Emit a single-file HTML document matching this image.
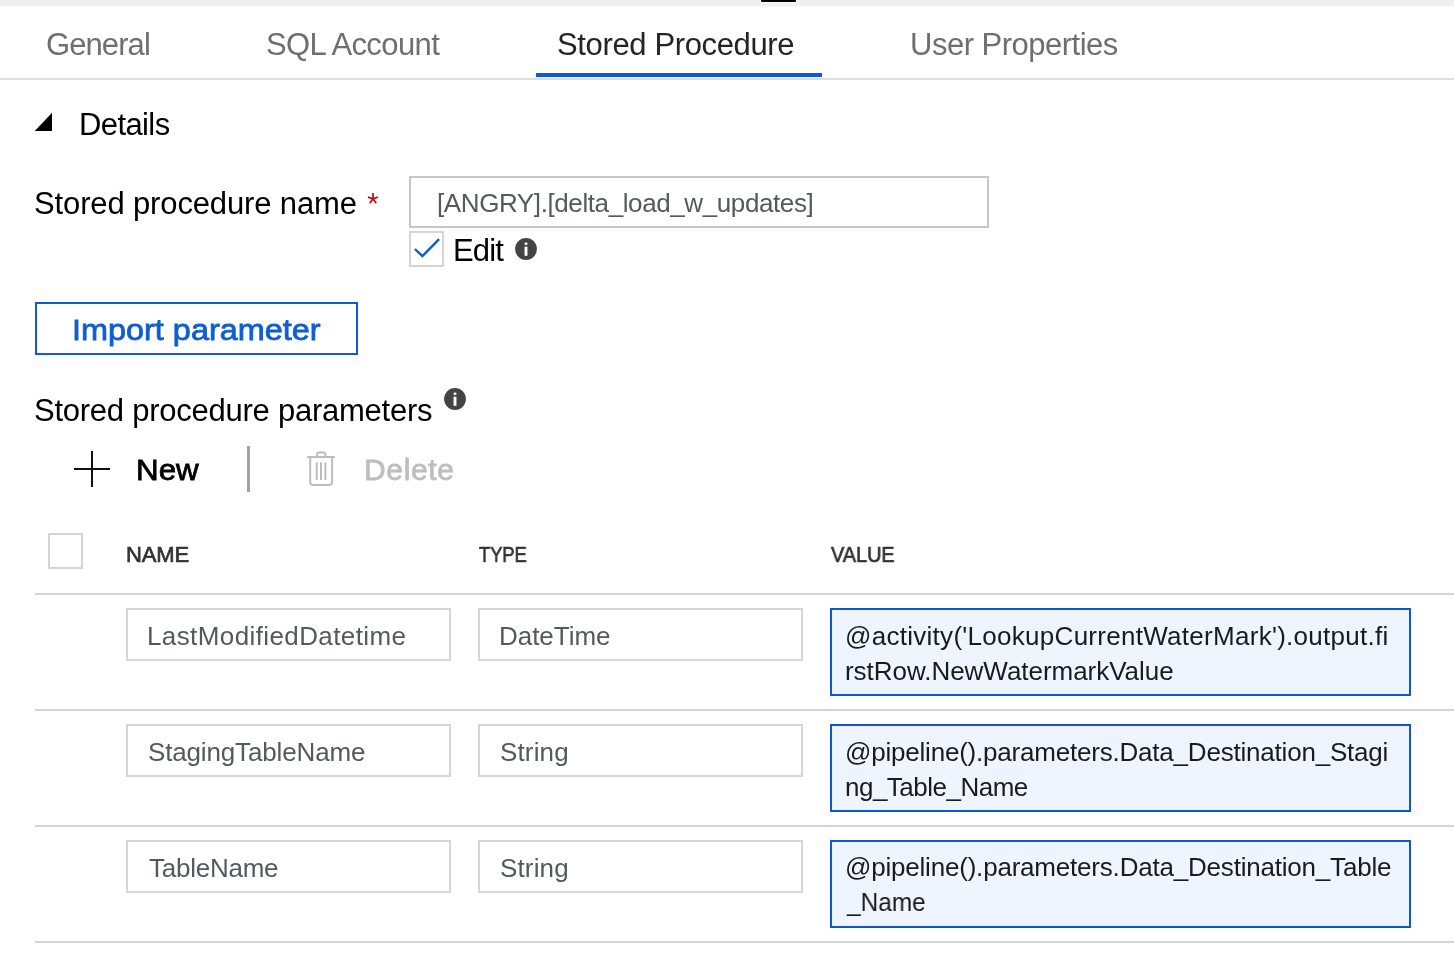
<!DOCTYPE html>
<html><head><meta charset="utf-8"><style>
html,body{margin:0;padding:0;background:#fff;width:1454px;height:954px;overflow:hidden;position:relative}
.t{position:absolute;white-space:pre;line-height:1;font-family:"Liberation Sans",sans-serif;will-change:transform}
.r{position:absolute;box-sizing:border-box}
</style></head><body>

<div class="r" style="left:0;top:0;width:1454px;height:6px;background:#f0f0f0"></div>
<div class="r" style="left:0;top:6px;width:1454px;height:1px;background:#f8f8f8"></div>
<div class="r" style="left:760px;top:0;width:37px;height:3px;background:#fff;border-radius:0 0 2px 2px"></div>
<div class="r" style="left:761px;top:0;width:35px;height:2px;background:#000;border-radius:0 0 1px 1px"></div>
<div class="t" style="left:45.50px;top:29.00px;font-size:31px;font-weight:400;color:#6f6f6f;letter-spacing:-0.917px;">General</div>
<div class="t" style="left:266.00px;top:29.00px;font-size:31px;font-weight:400;color:#6f6f6f;letter-spacing:-0.600px;">SQL Account</div>
<div class="t" style="left:556.50px;top:29.00px;font-size:31px;font-weight:400;color:#252525;letter-spacing:-0.367px;">Stored Procedure</div>
<div class="t" style="left:909.50px;top:29.00px;font-size:31px;font-weight:400;color:#6f6f6f;letter-spacing:-0.500px;">User Properties</div>
<div class="r" style="left:0;top:78px;width:1454px;height:2px;background:#dedede"></div>
<div class="r" style="left:536px;top:73px;width:286px;height:4px;background:#0a5bd6"></div>
<svg style="position:absolute;left:0;top:0" width="60" height="140"><polygon points="34.8,131 52,131 52,112.7" fill="#000"/></svg>
<div class="t" style="left:79.00px;top:109.00px;font-size:31px;font-weight:400;color:#000;letter-spacing:-0.600px;">Details</div>
<div class="t" style="left:33.50px;top:188.40px;font-size:31px;font-weight:400;color:#000;letter-spacing:-0.135px;">Stored procedure name</div>
<svg style="position:absolute;left:360px;top:188px" width="26" height="22"><g stroke="#b0121d" stroke-width="1.75" stroke-linecap="butt" fill="none" transform="translate(13,10.8)"><line x1="0" y1="0" x2="0" y2="-5.8"/><line x1="0" y1="0" x2="-5" y2="-1.7"/><line x1="0" y1="0" x2="4.8" y2="-1.7"/><line x1="0" y1="0" x2="-3.2" y2="4.4"/><line x1="0" y1="0" x2="3.2" y2="4.4"/></g></svg>
<div class="r" style="left:409px;top:176px;width:580px;height:52px;border:2px solid #c6c6c6"></div>
<div class="t" style="left:437.00px;top:190.30px;font-size:26px;font-weight:400;color:#55595e;letter-spacing:-0.400px;">[ANGRY].[delta_load_w_updates]</div>
<div class="r" style="left:409px;top:231px;width:35px;height:36px;border:2px solid #d4d4d4"></div>
<svg style="position:absolute;left:405px;top:227px" width="44" height="44"><polyline points="9.9,22 17.4,29.1 34.1,12.2" fill="none" stroke="#0b5cd5" stroke-width="2.4"/></svg>
<div class="t" style="left:453.00px;top:235.00px;font-size:31px;font-weight:400;color:#000;letter-spacing:-0.867px;">Edit</div>
<svg style="position:absolute;left:512.3px;top:234.9px" width="28" height="28"><circle cx="14" cy="14" r="10.9" fill="#444"/><rect x="12.5" y="7.5" width="3" height="2.6" rx="1.3" fill="#fff"/><rect x="12.55" y="11.7" width="2.9" height="9.1" fill="#fff"/></svg>
<div class="r" style="left:35px;top:302px;width:323px;height:53px;border:2px solid #0f5dd4"></div>
<div class="t" style="left:72.10px;top:315.00px;font-size:30px;font-weight:400;color:#0f5dd4;letter-spacing:0.000px;transform:scaleX(1.0803);transform-origin:0 0;-webkit-text-stroke:0.8px #0f5dd4;">Import parameter</div>
<div class="t" style="left:33.80px;top:395.00px;font-size:31px;font-weight:400;color:#000;letter-spacing:-0.246px;">Stored procedure parameters</div>
<svg style="position:absolute;left:440.9px;top:384.9px" width="28" height="28"><circle cx="14" cy="14" r="10.9" fill="#444"/><rect x="12.5" y="7.5" width="3" height="2.6" rx="1.3" fill="#fff"/><rect x="12.55" y="11.7" width="2.9" height="9.1" fill="#fff"/></svg>
<div class="r" style="left:74px;top:468px;width:35.5px;height:2px;background:#111"></div>
<div class="r" style="left:91px;top:451.3px;width:2px;height:35.5px;background:#111"></div>
<div class="t" style="left:136.00px;top:455.10px;font-size:30px;font-weight:400;color:#000;letter-spacing:0.000px;transform:scaleX(1.0448);transform-origin:0 0;-webkit-text-stroke:0.8px #000;">New</div>
<div class="r" style="left:247px;top:446px;width:3px;height:46px;background:#a3a3a3"></div>
<svg style="position:absolute;left:300px;top:445px" width="44" height="46"><g fill="none" stroke="#bdbdbd" stroke-width="2"><line x1="7" y1="12" x2="35" y2="12"/><path d="M17.1,12 V9.6 a2,2 0 0 1 2,-2 h4.25 a2,2 0 0 1 2,2 V12"/><path d="M10.2,12 V36.9 a3,3 0 0 0 3,3 h15.9 a3,3 0 0 0 3,-3 V12"/><line x1="16.7" y1="17.3" x2="16.7" y2="35"/><line x1="21" y1="17.3" x2="21" y2="35"/><line x1="25.4" y1="17.3" x2="25.4" y2="35"/></g></svg>
<div class="t" style="left:364.20px;top:455.10px;font-size:30px;font-weight:400;color:#bebebe;letter-spacing:0.640px;-webkit-text-stroke:0.8px #bebebe;">Delete</div>
<div class="r" style="left:48px;top:533px;width:35px;height:36px;border:2px solid #d4d4d4"></div>
<div class="t" style="left:126.40px;top:544.00px;font-size:22px;font-weight:400;color:#333;letter-spacing:-0.167px;-webkit-text-stroke:0.7px #333;">NAME</div>
<div class="t" style="left:479.00px;top:544.00px;font-size:22px;font-weight:400;color:#333;letter-spacing:0.000px;transform:scaleX(0.8316);transform-origin:0 0;-webkit-text-stroke:0.7px #333;">TYPE</div>
<div class="t" style="left:830.80px;top:544.00px;font-size:22px;font-weight:400;color:#333;letter-spacing:0.000px;transform:scaleX(0.9029);transform-origin:0 0;-webkit-text-stroke:0.7px #333;">VALUE</div>
<div class="r" style="left:35px;top:593px;width:1419px;height:2px;background:#d4d4d4"></div>
<div class="r" style="left:35px;top:709px;width:1419px;height:2px;background:#d4d4d4"></div>
<div class="r" style="left:35px;top:825px;width:1419px;height:2px;background:#d4d4d4"></div>
<div class="r" style="left:35px;top:941px;width:1419px;height:2px;background:#d4d4d4"></div>
<div class="r" style="left:126px;top:608px;width:325px;height:53px;border:2px solid #d6d6d6"></div>
<div class="r" style="left:478px;top:608px;width:325px;height:53px;border:2px solid #d6d6d6"></div>
<div class="r" style="left:830px;top:608px;width:581px;height:88px;border:2px solid #0c57d4;background:#eef5fe"></div>
<div class="t" style="left:147.10px;top:623.00px;font-size:26px;font-weight:400;color:#55595e;letter-spacing:0.395px;">LastModifiedDatetime</div>
<div class="t" style="left:499.30px;top:623.00px;font-size:26px;font-weight:400;color:#55595e;letter-spacing:-0.029px;">DateTime</div>
<div class="t" style="left:844.90px;top:623.00px;font-size:26px;font-weight:400;color:#1b1b1b;letter-spacing:0.282px;">@activity('LookupCurrentWaterMark').output.fi</div>
<div class="t" style="left:844.50px;top:658.00px;font-size:26px;font-weight:400;color:#1b1b1b;letter-spacing:-0.035px;">rstRow.NewWatermarkValue</div>
<div class="r" style="left:126px;top:724px;width:325px;height:53px;border:2px solid #d6d6d6"></div>
<div class="r" style="left:478px;top:724px;width:325px;height:53px;border:2px solid #d6d6d6"></div>
<div class="r" style="left:830px;top:724px;width:581px;height:88px;border:2px solid #0c57d4;background:#eef5fe"></div>
<div class="t" style="left:147.50px;top:739.00px;font-size:26px;font-weight:400;color:#55595e;letter-spacing:-0.153px;">StagingTableName</div>
<div class="t" style="left:499.70px;top:739.00px;font-size:26px;font-weight:400;color:#55595e;letter-spacing:0.140px;">String</div>
<div class="t" style="left:844.90px;top:739.00px;font-size:26px;font-weight:400;color:#1b1b1b;letter-spacing:-0.207px;">@pipeline().parameters.Data_Destination_Stagi</div>
<div class="t" style="left:844.50px;top:774.00px;font-size:26px;font-weight:400;color:#1b1b1b;letter-spacing:-0.508px;">ng_Table_Name</div>
<div class="r" style="left:126px;top:840px;width:325px;height:53px;border:2px solid #d6d6d6"></div>
<div class="r" style="left:478px;top:840px;width:325px;height:53px;border:2px solid #d6d6d6"></div>
<div class="r" style="left:830px;top:840px;width:581px;height:88px;border:2px solid #0c57d4;background:#eef5fe"></div>
<div class="t" style="left:148.50px;top:855.00px;font-size:26px;font-weight:400;color:#55595e;letter-spacing:-0.250px;">TableName</div>
<div class="t" style="left:499.70px;top:855.00px;font-size:26px;font-weight:400;color:#55595e;letter-spacing:0.140px;">String</div>
<div class="t" style="left:844.90px;top:854.00px;font-size:26px;font-weight:400;color:#1b1b1b;letter-spacing:-0.202px;">@pipeline().parameters.Data_Destination_Table</div>
<div class="t" style="left:846.80px;top:889.40px;font-size:26px;font-weight:400;color:#1b1b1b;letter-spacing:0.000px;transform:scaleX(0.9393);transform-origin:0 0;">_Name</div>
</body></html>
